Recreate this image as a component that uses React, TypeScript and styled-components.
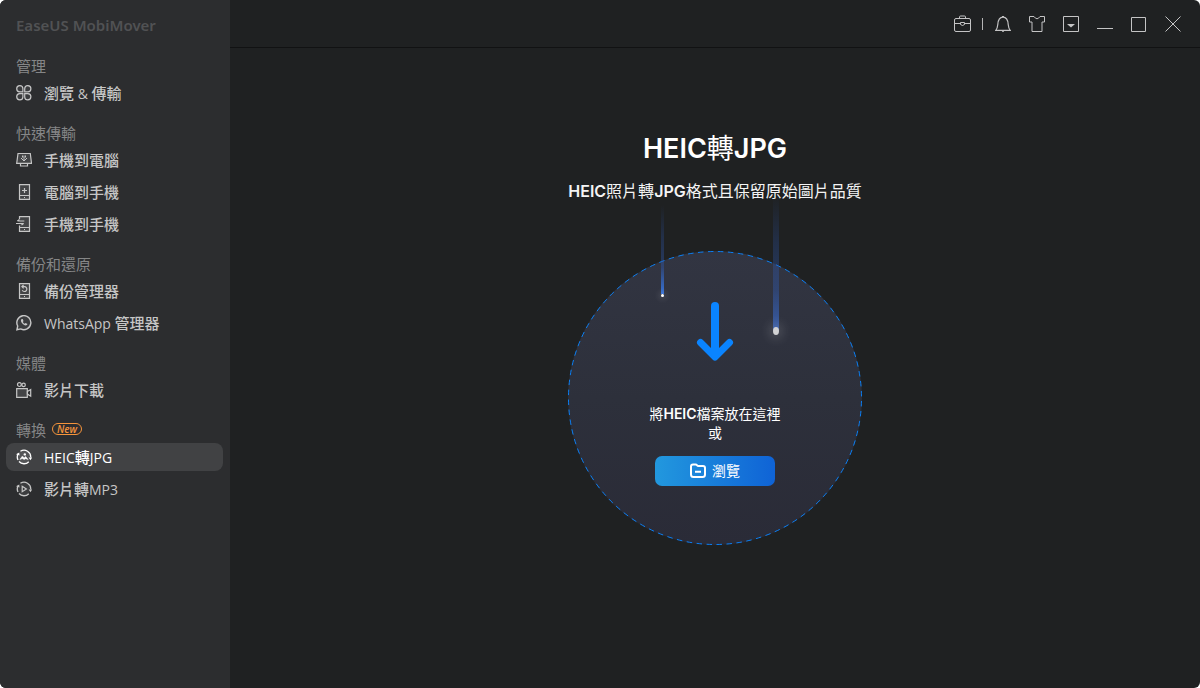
import React from "react";
import styled, { createGlobalStyle } from "styled-components";

const GlobalStyle = createGlobalStyle`
  *, *::before, *::after { box-sizing: border-box; }
  body { margin: 0; background: #ffffff; }
  button { font: inherit; }
`;

const uiFont = `"Open Sans", "Noto Sans CJK TC", sans-serif`;
const brandFont = `"Noto Sans", "Open Sans", sans-serif`;
const displayFont = `Inter, "Noto Sans CJK TC", sans-serif`;

const Window = styled.div`
  display: grid;
  grid-template-columns: 230px 1fr;
  min-height: 100vh;
  border-radius: 6px;
  overflow: hidden;
  background: #1f2122;
  font-family: ${uiFont};
`;

const Sidebar = styled.aside`
  background: #2c2d2f;
  padding: 11px 7px 12px 6px;
`;

const Brand = styled.div`
  height: 28px;
  padding-left: 10px;
  margin-bottom: 12px;
  line-height: 28px;
  font-family: ${brandFont};
  font-size: 15px;
  font-weight: 600;
  color: #515254;
`;

const Nav = styled.nav`
  display: flex;
  flex-direction: column;
  gap: 11px;
`;

const SectionTitle = styled.h2`
  display: flex;
  align-items: center;
  gap: 6px;
  height: 28px;
  margin: 0;
  padding-left: 10px;
  font-size: 15px;
  font-weight: 400;
  color: #858687;
`;

const List = styled.ul`
  display: flex;
  flex-direction: column;
  gap: 4px;
  margin: 0;
  padding: 0;
  list-style: none;
`;

const NavLink = styled.a<{ $active?: boolean }>`
  display: flex;
  align-items: center;
  gap: 12px;
  height: 28px;
  padding-left: 10px;
  border-radius: 8px;
  text-decoration: none;
  white-space: pre;
  font-size: 15px;
  line-height: 20px;
  font-weight: 500;
  color: ${(p) => (p.$active ? "#ffffff" : "#c6c6c6")};
  background: ${(p) => (p.$active ? "#414244" : "transparent")};

  svg { flex: none; }
`;

const Latin = styled.span`
  font-size: 14px;
  font-weight: 500;
`;

const NewBadge = styled.span`
  display: inline-flex;
  align-items: center;
  justify-content: center;
  width: 30px;
  height: 12px;
  border: 1px solid #f5943c;
  border-radius: 6px;
  font-size: 10px;
  font-style: italic;
  font-weight: 600;
  line-height: 10px;
  color: #f5943c;
`;

const Main = styled.div`
  display: flex;
  flex-direction: column;
  min-width: 0;
`;

const TitleBar = styled.header`
  display: flex;
  align-items: center;
  justify-content: flex-end;
  gap: 18px;
  height: 48px;
  padding-right: 19px;
  border-bottom: 1px solid #111213;
`;

const ToolGroup = styled.div`
  display: flex;
  align-items: center;
  gap: 10px;
`;

const Divider = styled.span`
  width: 1px;
  height: 12px;
  margin-right: 2px;
  background: #b5b5b6;
`;

const IconButton = styled.button`
  display: flex;
  padding: 0;
  border: 0;
  background: none;
  color: #c4c4c5;
`;

const Content = styled.main`
  display: flex;
  flex-direction: column;
  align-items: center;
  padding: 81px 20px 40px;
  font-family: ${displayFont};
  color: #ffffff;
`;

const PageTitle = styled.h1`
  margin: 0;
  font-size: 27px;
  font-weight: 400;
  line-height: 40px;
`;

const Subtitle = styled.p`
  margin: 10px 0 48px;
  font-size: 16px;
  line-height: 24px;
  color: #f4f4f4;
`;

const Strong = styled.span`
  font-weight: 600;
`;

const DropZone = styled.section`
  position: relative;
  display: flex;
  flex-direction: column;
  align-items: center;
  width: 294px;
  height: 294px;
  padding-top: 50px;
  border-radius: 50%;
  background: linear-gradient(#323542, #2d303b 50%, #2a2b37);
`;

const Ring = styled.svg`
  position: absolute;
  inset: 0;
`;

const Beam = styled.span<{ $left: number; $top: number; $width: number; $height: number; $tip: string }>`
  position: absolute;
  left: ${(p) => p.$left}px;
  top: ${(p) => p.$top}px;
  width: ${(p) => p.$width}px;
  height: ${(p) => p.$height}px;
  background: linear-gradient(rgba(42, 80, 160, 0), rgba(42, 80, 160, 0.3) 35%, rgba(48, 88, 170, 0.45) 70%, ${(p) => p.$tip});
`;

const Spark = styled.span<{ $left: number; $top: number; $width: number; $height: number; $glow: number }>`
  position: absolute;
  left: ${(p) => p.$left}px;
  top: ${(p) => p.$top}px;
  width: ${(p) => p.$width}px;
  height: ${(p) => p.$height}px;
  border-radius: 50%;
  background: ${(p) => (p.$glow > 8 ? "#d2d2d4" : "#ffffff")};
  box-shadow: 0 0 ${(p) => p.$glow}px ${(p) => p.$glow / 4}px rgba(255, 255, 255, 0.2);
`;

const DropText = styled.p`
  margin: 43px 0 14px;
  font-size: 14px;
  line-height: 19px;
  text-align: center;
`;

const BrowseButton = styled.button`
  display: flex;
  align-items: center;
  justify-content: center;
  gap: 6px;
  width: 120px;
  height: 30px;
  padding: 0;
  border: 0;
  border-radius: 7px;
  font-size: 14px;
  line-height: 18px;
  color: #ffffff;
  background: linear-gradient(90deg, #2298de, #0f63d6);
`;

const Icon = ({ children, size = 16, w = 1.2 }: { children: React.ReactNode; size?: number; w?: number }) => (
  <svg width={size} height={size} viewBox={`0 0 ${size} ${size}`} fill="none" stroke="currentColor" strokeWidth={w} aria-hidden="true">
    {children}
  </svg>
);

const CloverIcon = () => (
  <Icon>
    <path
      d="M6.900 6.900H3.700A3.100 3.100 0 1 1 6.900 3.700zM8.700 6.900h3.200A3.100 3.100 0 1 0 8.700 3.700zM6.900 8.700H3.700a3.100 3.100 0 1 0 3.200 3.200zM8.700 8.700h3.200a3.100 3.100 0 1 1-3.200 3.200z"
      fill="currentColor"
      fillOpacity=".1"
    />
  </Icon>
);
const ToComputerIcon = () => (
  <Icon>
    <path d="M2 1.500h12.300l1.200 9.800H.7z" fill="currentColor" fillOpacity=".15" />
    <path d="M4.500 11.800v2.200h7v-2.200" />
    <path d="M8 3.500v5.500M5 6l3 3 3-3M6.500 3.500v2M9.500 3.500v2" strokeWidth="1" />
  </Icon>
);
const ToPhoneIcon = () => (
  <Icon>
    <path d="M3.500.6h10v14.800h-10z" fill="currentColor" fillOpacity=".15" />
    <path d="M3.500 11.500h10M8.500 4v5M6 6.500h5M8 13.500h1" />
  </Icon>
);
const PhoneToPhoneIcon = () => (
  <Icon>
    <path d="M3.500 3V.6h10v14.800h-10V9.500" fill="currentColor" fillOpacity=".15" />
    <path d="M3.500 11.500h10M8 13.500h1M1.500 5h6.800M0 7.500h7.800M1.300 5l2.200-1.500M7.500 7.500 5.500 9" />
  </Icon>
);
const BackupIcon = () => (
  <Icon>
    <path d="M3.500.6h10v14.800h-10z" fill="currentColor" fillOpacity=".15" />
    <path d="M3.500 11.500h10M8 13.500h1M6 3.600h3a2.500 2.500 0 1 1-2.800 3.700M7.600 1.900 5.900 3.600l1.700 1.700" />
  </Icon>
);
const WhatsAppIcon = () => (
  <Icon w={1.4}>
    <path d="M.9 14.800 1.700 11A7 7 0 1 1 4.700 13.900z" fill="currentColor" fillOpacity=".1" />
    <path
      d="M5.700 4c-1.200.8-1 2.600.4 4.300s3.400 2.900 4.800 1.800l.6-1-1.900-1.100-1 .8C7.800 8.500 7.200 7.800 6.900 7l.6-.9-.8-2.100z"
      fill="currentColor"
      stroke="none"
    />
  </Icon>
);
const CameraIcon = () => (
  <Icon>
    <path d="M.7 6.600h10.600v8.700H.7z" fill="currentColor" fillOpacity=".15" />
    <circle cx="3.400" cy="2.600" r="1.900" />
    <circle cx="7.600" cy="2.900" r="1.700" />
    <path d="M11.400 9.600 14.700 7.500v6.700l-3.300-2.100z" />
  </Icon>
);
const CycleArrows = () => (
  <>
    <circle cx="8" cy="8" r="6.400" fill="currentColor" fillOpacity=".1" stroke="none" />
    <path d="M4.400 2.300A6.700 6.700 0 0 1 14.700 8.500M12.800 12.700A6.700 6.700 0 0 1 3 12.500M2 11A6.700 6.700 0 0 1 2 5" strokeWidth="1.300" />
    <path d="M0 5.200 3.200 3.500 3.500 6.600zM12.600 8.500H16.200L14.500 11.200z" fill="currentColor" stroke="none" />
  </>
);
const HeicIcon = () => (
  <Icon>
    <CycleArrows />
    <path d="m3.900 10.500 2.300-3.300 2 1.500 1.500-1.200 2.400 3-2.400-.8-1.500.8-2-.9z" fill="currentColor" stroke="currentColor" strokeWidth=".5" />
    <circle cx="8.800" cy="5.400" r="1.200" fill="currentColor" stroke="none" />
  </Icon>
);
const Mp3Icon = () => (
  <Icon>
    <CycleArrows />
    <path d="M6.200 5.300 10.400 8l-4.200 2.700z" />
  </Icon>
);

type Item = { label: React.ReactNode; icon: React.ReactNode; active?: boolean };
type Section = { title: string; isNew?: boolean; items: Item[] };

const sections: Section[] = [
  { title: "管理", items: [{ label: <>瀏覽<Latin> &amp; </Latin>傳輸</>, icon: <CloverIcon /> }] },
  {
    title: "快速傳輸",
    items: [
      { label: "手機到電腦", icon: <ToComputerIcon /> },
      { label: "電腦到手機", icon: <ToPhoneIcon /> },
      { label: "手機到手機", icon: <PhoneToPhoneIcon /> },
    ],
  },
  {
    title: "備份和還原",
    items: [
      { label: "備份管理器", icon: <BackupIcon /> },
      { label: <><Latin>WhatsApp </Latin>管理器</>, icon: <WhatsAppIcon /> },
    ],
  },
  { title: "媒體", items: [{ label: "影片下載", icon: <CameraIcon /> }] },
  {
    title: "轉換",
    isNew: true,
    items: [
      { label: <><Latin>HEIC</Latin>轉<Latin>JPG</Latin></>, icon: <HeicIcon />, active: true },
      { label: <>影片轉<Latin>MP3</Latin></>, icon: <Mp3Icon /> },
    ],
  },
];

export default function App() {
  return (
    <Window lang="zh-Hant">
      <GlobalStyle />
      <Sidebar>
        <Brand>EaseUS MobiMover</Brand>
        <Nav>
          {sections.map((section) => (
            <section key={section.title}>
              <SectionTitle>
                {section.title}
                {section.isNew && <NewBadge>New</NewBadge>}
              </SectionTitle>
              <List>
                {section.items.map((item, i) => (
                  <li key={i}>
                    <NavLink href="#" $active={item.active} aria-current={item.active ? "page" : undefined}>
                      {item.icon}
                      <span>{item.label}</span>
                    </NavLink>
                  </li>
                ))}
              </List>
            </section>
          ))}
        </Nav>
      </Sidebar>
      <Main>
        <TitleBar>
          <ToolGroup>
            <IconButton aria-label="Toolbox">
              <Icon size={18} w={1}>
                <rect x=".5" y="3.500" width="16" height="13" rx="1.500" />
                <path d="M5.500 3.500v-1.500q0-1 1-1h4q1 0 1 1v1.500M.5 8.500h6M10.500 8.500h6M6.500 7.500h4v2q-2 2-4 0z" />
              </Icon>
            </IconButton>
            <Divider />
            <IconButton aria-label="Notifications">
              <Icon w={1.2}>
                <path d="M.8 14.400h14.400c-1.500-1.400-1.700-3-2-5.900C12.900 4 11.500 1.200 8 1.200S3.100 4 2.800 8.500c-.3 2.900-.5 4.500-2 5.900zM7 .5h2M7 15.800h2" />
              </Icon>
            </IconButton>
          </ToolGroup>
          <IconButton aria-label="Theme">
            <Icon w={1}>
              <path d="M.5.500H5Q8 5 11 .500h4.500v5.500h-2.500v9.500H3V6H.5z" />
            </Icon>
          </IconButton>
          <IconButton aria-label="Menu">
            <Icon w={1}>
              <path d="M.5.500h15v15H.5z" />
              <path d="M4 8h8l-4 3.500z" fill="currentColor" stroke="none" />
            </Icon>
          </IconButton>
          <IconButton aria-label="Minimize">
            <Icon w={1}><path d="M0 12.500h16" /></Icon>
          </IconButton>
          <IconButton aria-label="Maximize">
            <Icon w={1}><path d="M.5 1.500h14v14H.5z" /></Icon>
          </IconButton>
          <IconButton aria-label="Close">
            <Icon w={1}><path d="m.5.500 15 15M15.500.500l-15 15" /></Icon>
          </IconButton>
        </TitleBar>
        <Content>
          <PageTitle><Strong>HEIC</Strong>轉<Strong>JPG</Strong></PageTitle>
          <Subtitle><Strong>HEIC</Strong>照片轉<Strong>JPG</Strong>格式且保留原始圖片品質</Subtitle>
          <DropZone>
            <Ring viewBox="0 0 294 294" fill="none" aria-hidden="true">
              <circle cx="147" cy="147" r="146.500" stroke="#0a7ff5" strokeDasharray="5.500 4.500" strokeDashoffset="-3" />
            </Ring>
            <Beam $left={93} $top={-46} $width={3} $height={89} $tip="rgba(55, 120, 230, 0.9)" />
            <Spark $left={93} $top={43} $width={3} $height={3} $glow={6} />
            <Beam $left={205} $top={-56} $width={6} $height={136} $tip="rgba(58, 105, 200, 0.75)" />
            <Spark $left={205} $top={76} $width={6} $height={8} $glow={12} />
            <svg width="38" height="60" viewBox="0 0 38 60" fill="none" stroke="#0a84ff" strokeWidth="8" strokeLinecap="round" strokeLinejoin="round" aria-hidden="true">
              <path d="M4.500 41.500 19 56l14.500-14.500" strokeWidth="7" />
              <path d="M19 5v48" />
            </svg>
            <DropText>
              將<Strong>HEIC</Strong>檔案放在這裡
              <br />
              或
            </DropText>
            <BrowseButton>
              <Icon w={2}>
                <path d="M1 11.500v-8q0-2 2-2h2.500q1 0 1.500.8t1.500.8H13q2 0 2 2v6.400q0 2.500-2.500 2.500h-9Q1 14 1 11.500zM5 8.700h6" />
              </Icon>
              瀏覽
            </BrowseButton>
          </DropZone>
        </Content>
      </Main>
    </Window>
  );
}
